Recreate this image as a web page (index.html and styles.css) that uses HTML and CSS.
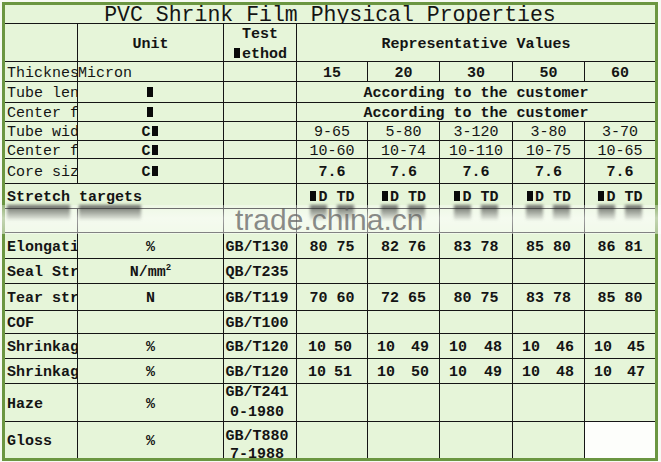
FILE: index.html
```html
<!DOCTYPE html>
<html>
<head>
<meta charset="utf-8">
<title>PVC Shrink Film Physical Properties</title>
<link rel="stylesheet" href="styles.css">
</head>
<body>
<div class="page">
  <div class="sheet">
    <div class="grid">
      <div class="c title span8"><div class="title-in">PVC Shrink Film Physical Properties</div></div>

      <div class="c"></div>
      <div class="c">Unit</div>
      <div class="c two head"><div>Test<br><span class="m">M</span>ethod</div></div>
      <div class="c span5">Representative Values</div>

      <div class="c l n"><span class="clip">Thickness</span></div>
      <div class="c lf n">Micron</div>
      <div class="c"></div>
      <div class="c">15</div><div class="c">20</div><div class="c">30</div><div class="c">50</div><div class="c">60</div>

      <div class="c l n"><span class="clip">Tube length</span></div>
      <div class="c"><span><span class="m">M</span></span></div>
      <div class="c"></div>
      <div class="c span5">According to the customer</div>

      <div class="c l n"><span class="clip">Center folding</span></div>
      <div class="c"><span><span class="m">M</span></span></div>
      <div class="c"></div>
      <div class="c span5">According to the customer</div>

      <div class="c l n"><span class="clip">Tube width</span></div>
      <div class="c"><span>C<span class="m">M</span></span></div>
      <div class="c"></div>
      <div class="c n">9-65</div><div class="c n">5-80</div><div class="c n">3-120</div><div class="c n">3-80</div><div class="c n">3-70</div>

      <div class="c l n"><span class="clip">Center folding width</span></div>
      <div class="c"><span>C<span class="m">M</span></span></div>
      <div class="c"></div>
      <div class="c n">10-60</div><div class="c n">10-74</div><div class="c n">10-110</div><div class="c n">10-75</div><div class="c n">10-65</div>

      <div class="c l n"><span class="clip">Core size</span></div>
      <div class="c"><span>C<span class="m">M</span></span></div>
      <div class="c"></div>
      <div class="c">7.6</div><div class="c">7.6</div><div class="c">7.6</div><div class="c">7.6</div><div class="c">7.6</div>

      <div class="c l span2">Stretch targets</div>
      <div class="c"></div>
      <div class="c"><span><span class="m">M</span>D TD</span></div>
      <div class="c"><span><span class="m">M</span>D TD</span></div>
      <div class="c"><span><span class="m">M</span>D TD</span></div>
      <div class="c"><span><span class="m">M</span>D TD</span></div>
      <div class="c"><span><span class="m">M</span>D TD</span></div>

      <div class="c"></div><div class="c"></div><div class="c"></div><div class="c"></div>
      <div class="c"></div><div class="c"></div><div class="c"></div><div class="c"></div>

      <div class="c l"><span class="clip">Elongation</span></div>
      <div class="c">%</div>
      <div class="c std">GB/T130</div>
      <div class="c">80 75</div><div class="c">82 76</div><div class="c">83 78</div><div class="c">85 80</div><div class="c">86 81</div>

      <div class="c l"><span class="clip">Seal Strength</span></div>
      <div class="c"><span>N/mm<sup>2</sup></span></div>
      <div class="c std">QB/T235</div>
      <div class="c"></div><div class="c"></div><div class="c"></div><div class="c"></div><div class="c"></div>

      <div class="c l"><span class="clip">Tear strength</span></div>
      <div class="c">N</div>
      <div class="c std">GB/T119</div>
      <div class="c">70 60</div><div class="c">72 65</div><div class="c">80 75</div><div class="c">83 78</div><div class="c">85 80</div>

      <div class="c l"><span class="clip">COF</span></div>
      <div class="c"></div>
      <div class="c std">GB/T100</div>
      <div class="c"></div><div class="c"></div><div class="c"></div><div class="c"></div><div class="c"></div>

      <div class="c l"><span class="clip">Shrinkage MD</span></div>
      <div class="c">%</div>
      <div class="c std">GB/T120</div>
      <div class="c pair first"><span>10</span><span>50</span></div>
      <div class="c pair"><span>10</span><span>49</span></div>
      <div class="c pair"><span>10</span><span>48</span></div>
      <div class="c pair"><span>10</span><span>46</span></div>
      <div class="c pair"><span>10</span><span>45</span></div>

      <div class="c l"><span class="clip">Shrinkage TD</span></div>
      <div class="c">%</div>
      <div class="c std">GB/T120</div>
      <div class="c pair first"><span>10</span><span>51</span></div>
      <div class="c pair"><span>10</span><span>50</span></div>
      <div class="c pair"><span>10</span><span>49</span></div>
      <div class="c pair"><span>10</span><span>48</span></div>
      <div class="c pair"><span>10</span><span>47</span></div>

      <div class="c l"><span class="clip">Haze</span></div>
      <div class="c">%</div>
      <div class="c std two"><div>GB/T241<br>0-1980</div></div>
      <div class="c"></div><div class="c"></div><div class="c"></div><div class="c"></div><div class="c"></div>

      <div class="c l"><span class="clip">Gloss</span></div>
      <div class="c">%</div>
      <div class="c std two low"><div>GB/T880<br>7-1988</div></div>
      <div class="c"></div><div class="c"></div><div class="c"></div><div class="c"></div><div class="c blank"></div>
    </div>
  </div>

  <div class="band" aria-hidden="true">
    <div class="smears">
      <div class="sm-cell wide"><i class="sm s1"></i><i class="sm s2"></i></div>
      <div class="sm-cell c73"></div>
      <div class="sm-cell c71"><i class="sm"></i><i class="sm"></i></div>
      <div class="sm-cell c72"><i class="sm"></i><i class="sm"></i></div>
      <div class="sm-cell c73"><i class="sm"></i><i class="sm"></i></div>
      <div class="sm-cell c72"><i class="sm"></i><i class="sm"></i></div>
      <div class="sm-cell c71"><i class="sm"></i><i class="sm"></i></div>
    </div>
  </div>
  <div class="watermark">trade.china.cn</div>
</div>
</body>
</html>
```

FILE: styles.css
```css
html, body {
  margin: 0;
  padding: 0;
  background: #ffffff;
}

body {
  font-family: "Liberation Mono", "DejaVu Sans Mono", monospace;
  font-size: 15px;
  font-weight: bold;
  color: #141414;
}

.page {
  position: relative;
  width: 661px;
  height: 462px;
  overflow: hidden;
  background: #f7faf4;
}

.sheet {
  margin: 2px 0 0 2px;
  width: 650px;
  border: 3px solid #6b9641;
}

/* 1px black rules come from the grid gaps */
.grid {
  display: grid;
  grid-template-columns: 72px 145px 72px 70px 71px 72px 71px 70px;
  grid-template-rows: 18px 37px 19px 20px 18px 18px 17px 24px 24px 23px 25px 24px 26px 22px 24px 24px 37px 36px;
  gap: 1px;
  background: #151515;
}

.c {
  background: #e6f5d9;
  display: flex;
  align-items: center;
  justify-content: center;
  white-space: nowrap;
  overflow: hidden;
  line-height: 16px;
  padding-top: 4px;
  box-sizing: border-box;
  min-width: 0;
}

.span2 { grid-column: span 2; }
.span5 { grid-column: span 5; }
.span8 { grid-column: span 8; }

.n { font-weight: normal; }

.c.l {
  justify-content: flex-start;
  padding-left: 2px;
}

.c.lf {
  justify-content: flex-start;
}

.clip {
  display: block;
  min-width: 0;
  overflow: hidden;
  white-space: nowrap;
}

.c.title {
  align-items: flex-start;
  padding-top: 0;
}

.title-in {
  height: 18px;
  overflow: hidden;
  font-size: 21.5px;
  line-height: 20px;
  font-weight: normal;
  text-align: center;
}

.c.std {
  padding-right: 6px;
}

.c.two {
  line-height: 20px;
  text-align: center;
  padding-top: 1px;
}

.c.two.head {
  padding-top: 4px;
}

.c.two.low {
  align-items: flex-start;
  line-height: 18px;
  padding-top: 6px;
}

.m {
  display: inline-block;
  width: 6px;
  height: 10px;
  margin: 0 2px 0 1px;
  background: #0a0a0a;
  color: transparent;
  overflow: hidden;
  vertical-align: baseline;
  font-size: 8px;
  line-height: 10px;
}

sup {
  font-size: 9px;
  line-height: 0;
  vertical-align: 6px;
}

.c.pair {
  justify-content: space-between;
  padding-left: 9px;
  padding-right: 10px;
}

.c.pair.first {
  padding-left: 11px;
  padding-right: 15px;
}

.c.blank {
  background: #fdfefb;
}

/* watermark band lying over the sheet */
.band {
  position: absolute;
  left: 0;
  top: 205px;
  width: 661px;
  height: 29px;
  background: linear-gradient(to bottom, rgba(255,255,255,0.3), rgba(255,255,255,0.6) 45%, rgba(255,255,255,0.45));
}

.smears {
  display: flex;
  margin-left: 5px;
}

.sm-cell {
  display: flex;
  justify-content: center;
  gap: 10px;
  height: 16px;
}

.sm-cell.wide { width: 218px; justify-content: flex-start; gap: 9px; padding-left: 2px; box-sizing: border-box; }
.c71 { width: 71px; }
.c72 { width: 72px; }
.c73 { width: 73px; }

.sm {
  display: block;
  width: 17px;
  height: 15px;
  background: linear-gradient(to bottom, rgba(40,40,40,0.7), rgba(40,40,40,0.05));
  filter: blur(1.5px);
}

.sm.s1 { width: 63px; }
.sm.s2 { width: 62px; }

.watermark {
  position: absolute;
  left: 235px;
  top: 205px;
  font-family: "Liberation Sans", Arial, sans-serif;
  font-size: 30px;
  line-height: 30px;
  font-weight: normal;
  color: rgba(95, 95, 95, 0.72);
}
```
